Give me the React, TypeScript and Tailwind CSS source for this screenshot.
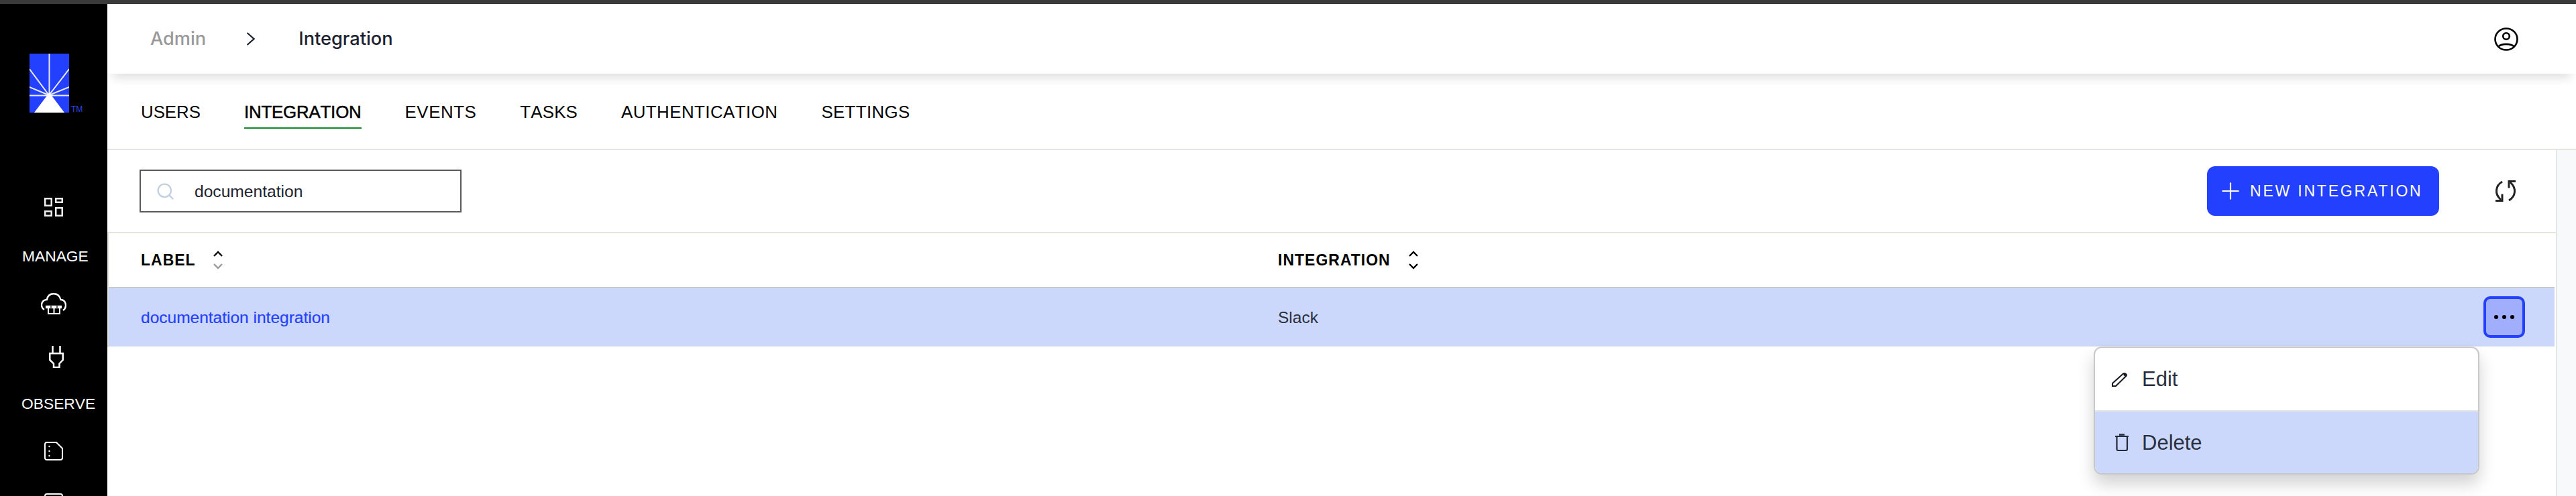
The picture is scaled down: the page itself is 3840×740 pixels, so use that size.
import { Plus, Search } from "lucide-react"

const tabs = [
  { label: "USERS", spacing: "" },
  { label: "INTEGRATION", spacing: "tracking-[-0.15px]" },
  { label: "EVENTS", spacing: "tracking-[0.6px]" },
  { label: "TASKS", spacing: "tracking-[0.2px]" },
  { label: "AUTHENTICATION", spacing: "tracking-[0.5px]" },
  { label: "SETTINGS", spacing: "tracking-[0.4px]" },
]

function Logo() {
  return (
    <svg width="59" height="88" viewBox="0 0 59 88" className="shrink-0">
      <rect width="59" height="88" fill="#2440ff" />
      <g stroke="#e8ebff" strokeWidth="2" fill="none">
        <path d="M29.5 0V62" />
        <path d="M29 62L0 23" />
        <path d="M29 62L59 23" />
        <path d="M29 62L0 50" />
        <path d="M29 62L59 50" />
        <path d="M0 62.5H59" />
      </g>
      <path d="M29.5 58L52 88H7Z" fill="#fff" />
    </svg>
  )
}

function GridIcon() {
  return (
    <svg width="28" height="28" viewBox="0 0 28 28" fill="none" stroke="#eee" strokeWidth="2.5">
      <rect x="1.25" y="1.25" width="9.5" height="10.5" />
      <rect x="17.25" y="1.25" width="9.5" height="5.5" />
      <rect x="1.25" y="20.25" width="9.5" height="6.5" />
      <rect x="17.25" y="15.25" width="9.5" height="11.5" />
    </svg>
  )
}

function CloudIcon() {
  return (
    <svg width="38" height="32" viewBox="0 0 38 32" fill="none" stroke="#fff" strokeWidth="2.4">
      <path d="M5 25C1 23 0 18 2 14C4 11 6 10 9 10C10 4 14 1.2 19 1.2C24 1.2 28 4 29.5 10C33 10 37 13 37 18C37 21 36 24 33 26" />
      <path d="M7 21H31" strokeWidth="4.4" />
      <path d="M11 21V31H28V21M19.5 21V31" strokeWidth="2" />
      <path d="M15 19V23M24 19V23" stroke="#000" strokeWidth="1.2" />
    </svg>
  )
}

function PlugIcon() {
  return (
    <svg width="22" height="33" viewBox="0 0 22 33" fill="none" stroke="#fff" strokeWidth="2.5">
      <path d="M5.5 0V11M16.5 0V11" />
      <path d="M1.25 11.25H20.75V21L15.5 26.5V32H7V26.5L1.25 21Z" />
    </svg>
  )
}

function FileIcon() {
  return (
    <svg width="28" height="28" viewBox="0 0 28 28" fill="none" stroke="#fff" strokeWidth="2">
      <path d="M4 1H18L27 10V24A3 3 0 0 1 24 27H4A3 3 0 0 1 1 24V4A3 3 0 0 1 4 1Z" />
      <circle cx="7.5" cy="7" r="1.2" fill="#fff" stroke="none" />
      <circle cx="7.5" cy="14" r="1.2" fill="#fff" stroke="none" />
      <circle cx="7.5" cy="21" r="1.2" fill="#fff" stroke="none" />
    </svg>
  )
}

function SortIcon({ faded }: { faded?: boolean }) {
  return (
    <svg width="14" height="28" viewBox="0 0 14 28" fill="none" strokeWidth="2.4">
      <path d="M1 8L7 2L13 8" stroke="#000" />
      <path d="M1 20L7 26L13 20" stroke={faded ? "#999" : "#000"} />
    </svg>
  )
}

function ProfileIcon() {
  return (
    <svg width="36" height="35" viewBox="0 0 36 35" fill="none" stroke="#000" strokeWidth="2.6">
      <ellipse cx="18" cy="17.5" rx="16.5" ry="16" />
      <circle cx="18" cy="13" r="4.8" />
      <path d="M6 29C10 23.5 26 23.5 30 29" />
    </svg>
  )
}

function RefreshIcon() {
  return (
    <svg width="34" height="32" viewBox="0 0 34 32" fill="none" stroke="#222" strokeWidth="3">
      <path d="M12 2C2 8 0 20 10 29" />
      <path d="M2 30.5H12V20.5" />
      <path d="M22 30C32 24 34 12 24 3" />
      <path d="M32 1.5H22V11.5" />
    </svg>
  )
}

function PencilIcon() {
  return (
    <svg width="24" height="22" viewBox="0 0 24 22" fill="none" stroke="#14171f" strokeWidth="2">
      <path d="M1 21V17L17 2.5C19 1 23 3 21.5 6L6 21Z" />
      <path d="M18 3L21 5.5" strokeWidth="3.5" />
    </svg>
  )
}

function TrashIcon() {
  return (
    <svg width="20" height="26" viewBox="0 0 20 26" fill="none" stroke="#242a3a" strokeWidth="2.2">
      <path d="M0 4H20" />
      <path d="M6 1.5H14" strokeWidth="2.4" />
      <path d="M2.5 5V23A2 2 0 0 0 4.5 25H16A2 2 0 0 0 18 23V5" />
    </svg>
  )
}

export default function App() {
  return (
    <div className="flex h-[740px] flex-col overflow-hidden bg-white font-['Liberation_Sans',Arial,sans-serif]">
      <div className="h-[6px] shrink-0 bg-[#3a3a3a]" />

      <div className="flex min-h-0 flex-1">
        {/* Sidebar */}
        <aside className="flex w-[160px] shrink-0 flex-col overflow-hidden bg-black text-[22.8px] leading-[26px] text-white [font-kerning:none]">
          <div className="ml-[44px] mt-[74px] flex items-end">
            <Logo />
            <span className="mb-[-2px] ml-[3px] text-[12px] leading-[14px] text-[#2f45e8]">TM</span>
          </div>
          <div className="ml-[66px] mt-[127px] flex"><GridIcon /></div>
          <div className="ml-[33px] mt-[46px]">MANAGE</div>
          <div className="ml-[61px] mt-[42px] flex"><CloudIcon /></div>
          <div className="ml-[73px] mt-[47px] flex"><PlugIcon /></div>
          <div className="ml-[32px] mt-[40px]">OBSERVE</div>
          <div className="ml-[66px] mt-[44px] flex shrink-0"><FileIcon /></div>
          <div className="ml-[66px] mt-[49px] h-[28px] w-[28px] shrink-0 rounded-[4px] border-2 border-white" />
        </aside>

        <main className="flex min-w-0 flex-1 flex-col">
          {/* Breadcrumb header */}
          <header className="relative z-10 flex h-[104px] shrink-0 items-center justify-between bg-white pl-[64px] pr-[86px] shadow-[0_14px_14px_-8px_rgba(0,0,0,0.13)]">
            <div className="flex items-center font-['Inter',sans-serif] text-[27.2px] font-medium">
              <span className="text-[#999]">Admin</span>
              <svg width="13" height="20" viewBox="0 0 13 20" fill="none" stroke="#1c2230" strokeWidth="2.2" className="ml-[60px] mr-[65px]">
                <path d="M1.5 1L11.5 10L1.5 19" />
              </svg>
              <span className="text-[#1c2230]">Integration</span>
            </div>
            <ProfileIcon />
          </header>

          {/* Tabs */}
          <nav className="flex h-[114px] shrink-0 items-start gap-[65px] border-b-2 border-[#e5e5df] pl-[50px] pt-[42px] text-[25.8px] leading-[30px] text-black [font-kerning:none]">
            {tabs.map((tab) => (
              <div
                key={tab.label}
                className={
                  tab.label === "INTEGRATION"
                    ? `h-[40px] border-b-2 border-[#0f8a2a] [-webkit-text-stroke:0.5px_black] ${tab.spacing}`
                    : `h-[40px] border-b-2 border-transparent ${tab.spacing}`
                }
              >
                {tab.label}
              </div>
            ))}
          </nav>

          <div className="flex min-h-0 flex-1">
            <div className="min-w-0 flex-1">
              {/* Toolbar */}
              <div className="flex h-[124px] items-center justify-between border-b-2 border-[#e5e5df] pl-[48px] pr-[58px]">
                <div className="flex h-[64px] w-[480px] items-center border-2 border-[#5a5a5a] pl-[22px]">
                  <Search size={29} strokeWidth={2} className="text-[#c5d0e0]" />
                  <span className="ml-[29px] pt-[2px] text-[24.6px] text-[#1c2230]">documentation</span>
                </div>
                <div className="flex items-center gap-[82px]">
                  <button className="flex h-[74px] w-[346px] items-center rounded-[12px] bg-[#2440ff] pl-[15px] text-[23px] tracking-[2.8px] text-white">
                    <Plus size={40} strokeWidth={1.3} />
                    <span className="ml-[9px]">NEW INTEGRATION</span>
                  </button>
                  <RefreshIcon />
                </div>
              </div>

              {/* Table */}
              <div className="mr-[2px] border-l-2 border-[#e5e5df]">
                <div className="flex h-[82px] items-center border-b-2 border-[#c9c9c9] pl-[48px] text-[23px] font-bold tracking-[1px] text-black">
                  <div className="flex w-[1695px] items-center gap-[26px]">
                    LABEL
                    <SortIcon faded />
                  </div>
                  <div className="flex items-center gap-[27px]">
                    INTEGRATION
                    <SortIcon />
                  </div>
                </div>

                <div className="relative flex h-[88px] items-center border-b-2 border-[#e6ebf7] bg-[#ccd8fb] pl-[48px] pr-[44px] text-[24.5px]">
                  <a className="w-[1695px] pt-[2px] text-[#2440ff] [-webkit-text-stroke:0.2px_#2440ff]">documentation integration</a>
                  <span className="flex-1 pt-[2px] text-[#2a2f3f]">Slack</span>
                  <button className="flex h-[62px] w-[62px] items-center justify-center gap-[6px] rounded-[10px] border-4 border-[#2440ff] bg-[#a0aefc]">
                    <i className="h-[6px] w-[6px] rounded-full bg-black" />
                    <i className="h-[6px] w-[6px] rounded-full bg-black" />
                    <i className="h-[6px] w-[6px] rounded-full bg-black" />
                  </button>

                  {/* Row actions menu */}
                  <div className="absolute right-[112px] top-[87px] z-20 w-[575px] overflow-hidden rounded-[12px] border-2 border-[#c8c8c8] bg-white text-[31px] text-[#2a2f3f] shadow-[0_14px_24px_rgba(0,0,0,0.18)]">
                    <div className="flex h-[95px] items-center border-b-2 border-[#e5e5e5] pl-[25px]">
                      <PencilIcon />
                      <span className="ml-[21px] pt-[2px]">Edit</span>
                    </div>
                    <div className="flex h-[92px] items-center bg-[#ccd8fb] pl-[30px]">
                      <TrashIcon />
                      <span className="ml-[20px] pt-[2px]">Delete</span>
                    </div>
                  </div>
                </div>
              </div>
            </div>

            {/* Scroll gutter */}
            <div className="w-[30px] shrink-0 border-l-2 border-[#e5e5e5] bg-[#f8f9fb]" />
          </div>
        </main>
      </div>
    </div>
  )
}
